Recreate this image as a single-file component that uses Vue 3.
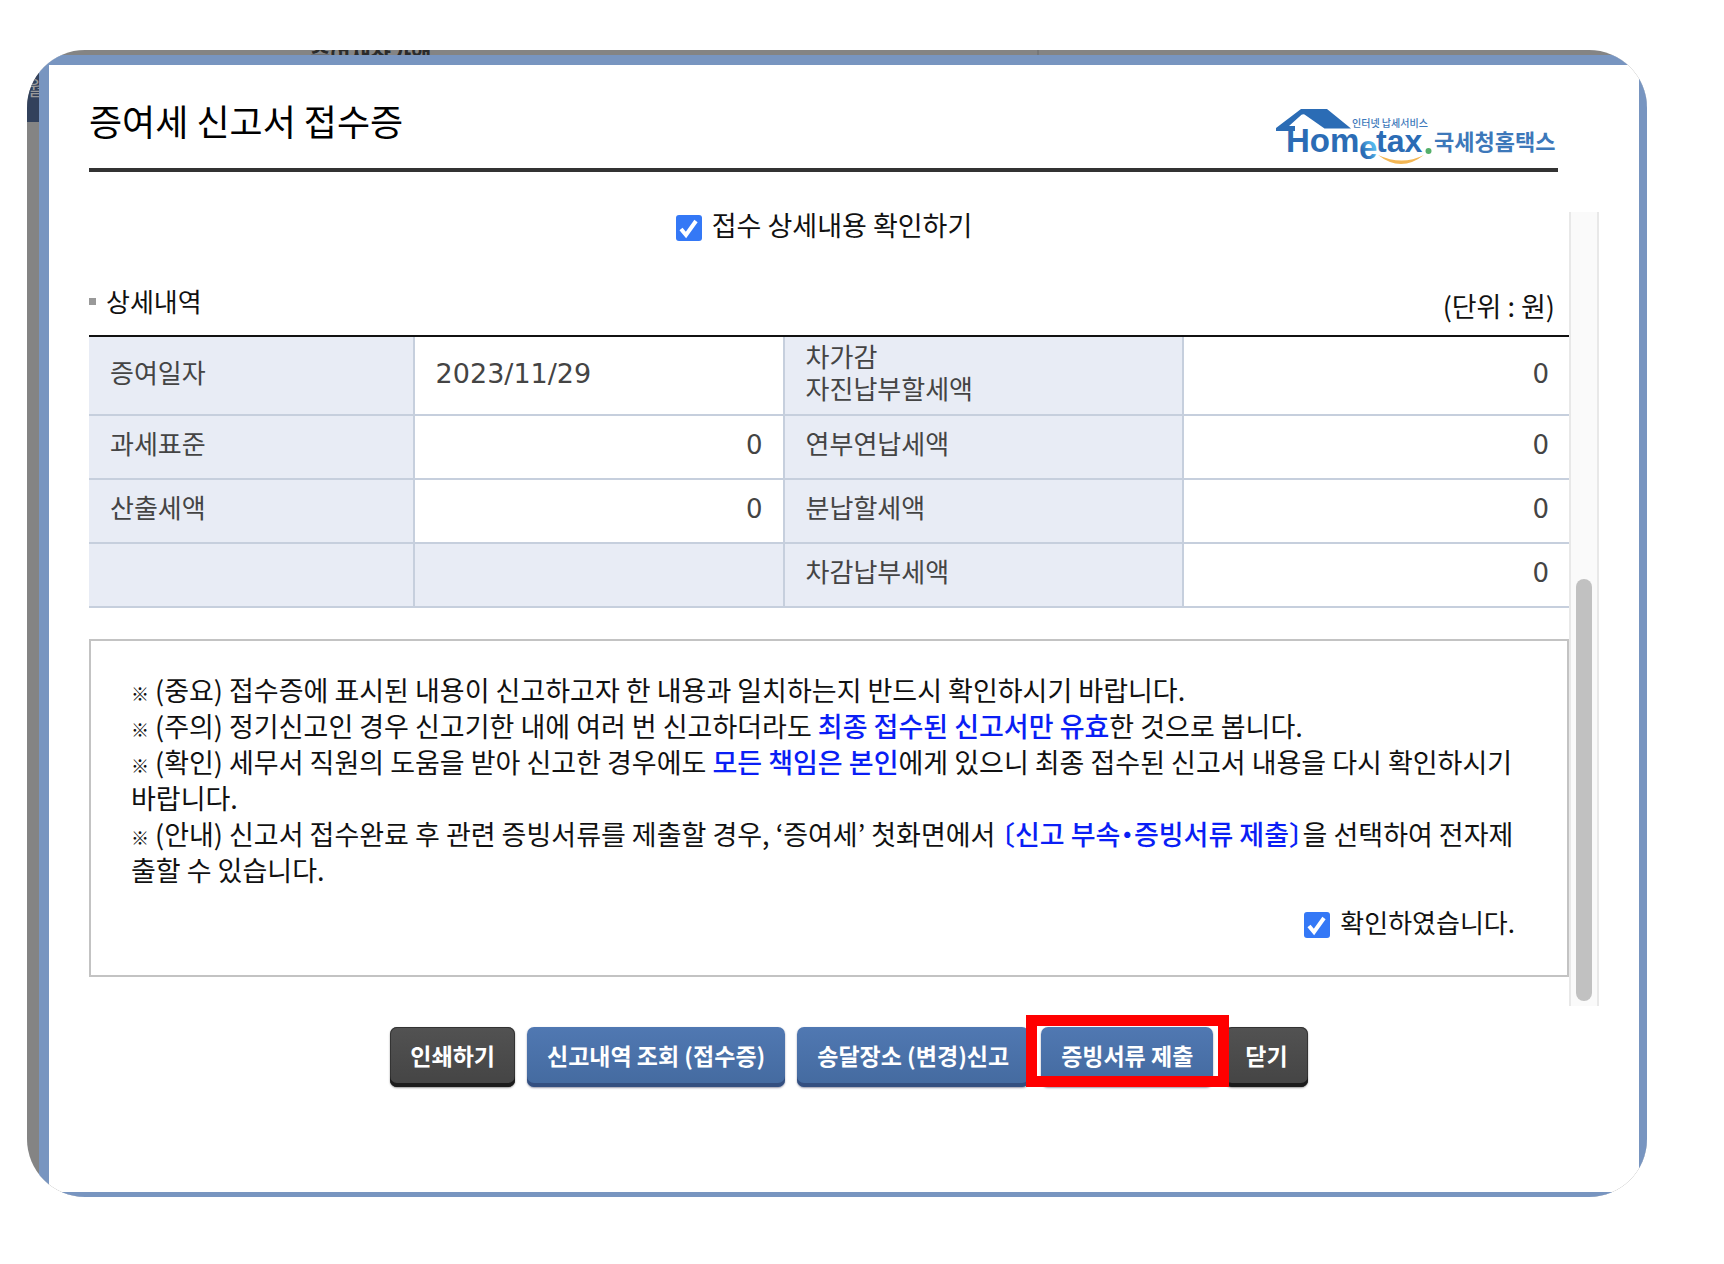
<script setup>
import { ref } from 'vue'

const showDetail = ref(true)
const confirmed = ref(true)

const notices = [
  [{ text: ' (중요) 접수증에 표시된 내용이 신고하고자 한 내용과 일치하는지 반드시 확인하시기 바랍니다.' }],
  [
    { text: ' (주의) 정기신고인 경우 신고기한 내에 여러 번 신고하더라도 ' },
    { text: '최종 접수된 신고서만 유효', strong: true },
    { text: '한 것으로 봅니다.' },
  ],
  [
    { text: ' (확인) 세무서 직원의 도움을 받아 신고한 경우에도 ' },
    { text: '모든 책임은 본인', strong: true },
    { text: '에게 있으니 최종 접수된 신고서 내용을 다시 확인하시기\n바랍니다.' },
  ],
  [
    { text: ' (안내) 신고서 접수완료 후 관련 증빙서류를 제출할 경우, ‘증여세’ 첫화면에서 ' },
    { text: '〔신고 부속・증빙서류 제출〕', strong: true },
    { text: '을 선택하여 전자제\n출할 수 있습니다.' },
  ],
]

const buttons = [
  { label: '인쇄하기', tone: 'dark' },
  { label: '신고내역 조회 (접수증)', tone: 'blue' },
  { label: '송달장소 (변경)신고', tone: 'blue' },
  { label: '증빙서류 제출', tone: 'blue', marked: true },
  { label: '닫기', tone: 'dark' },
]
</script>

<template>
  <div class="frame">
    <div class="behind" aria-hidden="true">
      <span class="behind-label">증여재산가액</span>
      <span class="behind-line"></span>
      <span class="behind-tab">월</span>
    </div>

    <main class="modal">
      <header class="head">
        <h1>증여세 신고서 접수증</h1>
        <svg class="logo" viewBox="15 12 284 60" role="img" aria-label="Hometax 국세청홈택스">
          <defs>
            <linearGradient id="e-tone" x1="0" y1="1" x2="1" y2="0">
              <stop offset="0.3" stop-color="#2b6cb5" />
              <stop offset="0.65" stop-color="#55b4ea" />
            </linearGradient>
          </defs>
          <path d="M17 33 L42 14 H68 L92 33.500 H65.500 L45.500 19.500 Q44 18.700 42.500 19.800 L30 31 H36 V36 H17 Z" fill="#2b6cb5" />
          <g class="latin">
            <text x="27" y="57" font-size="33" fill="#2b6cb5">Hom</text>
            <text x="117" y="57" font-size="32" fill="#2b6cb5">tax</text>
            <text x="100" y="64" font-size="33" fill="url(#e-tone)" stroke="#fff" stroke-width="1" paint-order="stroke">e</text>
          </g>
          <circle cx="169.500" cy="56" r="3" fill="#55b06a" />
          <path d="M119 60 Q142 78 165 60 Q143 71 119 60 Z" fill="#f3b653" />
          <text x="93" y="32" font-size="10" font-weight="500" fill="#3d78ba">인터넷 납세서비스</text>
          <text x="175" y="55" font-size="22" font-weight="700" fill="#3d78ba">국세청홈택스</text>
        </svg>
      </header>

      <div class="scroller">
        <div class="content">
          <label class="check detail-check">
            <input v-model="showDetail" type="checkbox" />
            <span>접수 상세내용 확인하기</span>
          </label>

          <div class="section-head">
            <h2>상세내역</h2>
            <span class="unit">(단위 : 원)</span>
          </div>

          <table>
            <colgroup>
              <col class="c1" /><col class="c2" /><col class="c3" /><col class="c4" />
            </colgroup>
            <tbody>
              <tr class="tall">
                <th scope="row">증여일자</th>
                <td class="date">2023/11/29</td>
                <th scope="row">차가감<br />자진납부할세액</th>
                <td>0</td>
              </tr>
              <tr>
                <th scope="row">과세표준</th>
                <td>0</td>
                <th scope="row">연부연납세액</th>
                <td>0</td>
              </tr>
              <tr>
                <th scope="row">산출세액</th>
                <td>0</td>
                <th scope="row">분납할세액</th>
                <td>0</td>
              </tr>
              <tr>
                <td class="blank"></td>
                <td class="blank"></td>
                <th scope="row">차감납부세액</th>
                <td>0</td>
              </tr>
            </tbody>
          </table>

          <section class="notice">
            <p v-for="(line, i) in notices" :key="i"><span class="mark">※</span><span v-for="(part, j) in line" :key="j" :class="{ strong: part.strong }">{{ part.text }}</span></p>
            <label class="check confirm-check">
              <input v-model="confirmed" type="checkbox" />
              <span>확인하였습니다.</span>
            </label>
          </section>
        </div>
        <div class="track"><div class="thumb"></div></div>
      </div>

      <footer class="actions">
        <button v-for="b in buttons" :key="b.label" type="button" :class="[b.tone, { marked: b.marked }]">{{ b.label }}</button>
      </footer>
    </main>
  </div>
</template>

<style>
body {
  margin: 0;
  background: #fff;
}
</style>

<style scoped>
.frame {
  position: relative;
  margin: 50px 77px 67px 27px;
  padding: 5px 0 0 12px;
  border-radius: 58px;
  overflow: hidden;
  background: #848484;
  color: #111;
  font-family: "Noto Sans CJK KR", sans-serif;
  font-size: 26px;
}
.behind-label {
  position: absolute;
  top: -11px;
  left: 283px;
  color: #2b2b2b;
  font-size: 22px;
  font-weight: 700;
  line-height: 28px;
}
.behind-line {
  position: absolute;
  top: 0;
  left: 1010px;
  width: 2px;
  height: 5px;
  background: #777;
}
.behind-tab {
  position: absolute;
  top: 20px;
  left: 0;
  width: 12px;
  height: 52px;
  overflow: hidden;
  background: #32415c;
  color: #999;
  font-size: 20px;
  line-height: 36px;
}
.modal {
  position: relative;
  border: solid #7895c0;
  border-width: 10px 8px 5px 10px;
  background: #fff;
}
.head {
  display: flex;
  justify-content: space-between;
  align-items: flex-start;
  margin: 0 81px 0 40px;
  padding-top: 25px;
  height: 78px;
  border-bottom: 4px solid #333;
}
h1 {
  margin: 0;
  color: #000;
  font-size: 36px;
  font-weight: 400;
  line-height: 60px;
}
.logo {
  flex: none;
  width: 284px;
  height: 60px;
  margin-top: 17px;
  font-family: "Noto Sans CJK KR", sans-serif;
}
.latin {
  font-family: "Liberation Sans", sans-serif;
  font-weight: 700;
}
.scroller {
  display: flex;
  margin: 40px 40px 0 40px;
}
.content {
  flex: 1;
  min-width: 0;
  padding-bottom: 29px;
}
.track {
  box-sizing: border-box;
  display: flex;
  align-items: flex-end;
  justify-content: center;
  width: 30px;
  padding-bottom: 5px;
  border: solid #e8e8e8;
  border-width: 0 2px;
  background: #fafafa;
}
.thumb {
  width: 16px;
  height: 53.5%;
  border-radius: 8px;
  background: #c1c1c1;
}
.check {
  display: flex;
  align-items: center;
  gap: 10px;
}
.check span {
  padding-bottom: 6px;
  line-height: 26px;
}
.detail-check {
  justify-content: center;
  margin-right: 10px;
  font-size: 27px;
}
.check input {
  appearance: none;
  width: 26px;
  height: 26px;
  margin: 0;
  border-radius: 3px;
  background: #3478f6;
}
.check input:checked {
  background: #3478f6 url("data:image/svg+xml,%3Csvg xmlns='http://www.w3.org/2000/svg' viewBox='0 0 26 26'%3E%3Cpath d='M5 14l5 6L20 6' fill='none' stroke='white' stroke-width='4'/%3E%3C/svg%3E") center / 100% no-repeat;
}
.section-head {
  display: flex;
  align-items: flex-start;
  justify-content: space-between;
  margin-top: 42px;
  padding: 0 14px 9px 0;
  line-height: 40px;
}
.unit {
  font-size: 27px;
}
h2 {
  display: flex;
  align-items: center;
  gap: 10px;
  margin: 0;
  font-size: 26px;
  font-weight: 400;
  line-height: 30px;
}
h2::before {
  content: "";
  width: 7px;
  height: 7px;
  background: #999;
}
table {
  width: 100%;
  border-collapse: separate;
  border-spacing: 0;
  table-layout: fixed;
  border-top: 2px solid #111;
  color: #444;
}
.c1 { width: 22%; }
.c2 { width: 25%; }
.c3 { width: 27%; }
.c4 { width: 26%; }
th,
td {
  box-sizing: border-box;
  height: 64px;
  padding: 0 20px 0 21px;
  border: solid #c6cfdd;
  border-width: 0 2px 2px 0;
  line-height: 32px;
}
td:last-child {
  border-right: 0;
}
.tall > * {
  height: 79px;
}
th {
  padding-bottom: 8px;
  background: #e8ecf5;
  font-weight: 400;
  text-align: left;
}
td {
  font-family: "DejaVu Sans", sans-serif;
  padding-bottom: 4px;
  text-align: right;
}
.date {
  font-size: 27px;
  text-align: left;
}
.blank {
  background: #e8ecf5;
}
.notice {
  margin-top: 31px;
  padding: 31px 52px 34px 40px;
  border: 2px solid #c3c3c3;
  color: #111;
}
.notice p {
  margin: 0;
  font-size: 27px;
  line-height: 36px;
  white-space: pre;
  font-feature-settings: "halt";
}
.mark {
  font-size: 18px;
  line-height: 18px;
}
.strong {
  color: #0a1ef5;
  font-weight: 500;
}
.confirm-check {
  justify-content: flex-end;
  margin-top: 21px;
}
.actions {
  display: flex;
  justify-content: center;
  gap: 12px;
  padding: 21px 0 105px 10px;
}
button {
  position: relative;
  height: 60px;
  padding: 0 20px 4px;
  border: 0;
  border-radius: 7px;
  color: #fff;
  font-family: inherit;
  font-size: 23px;
  font-weight: 700;
  white-space: nowrap;
}
.dark {
  background: linear-gradient(#525252, #444);
  box-shadow: inset 0 -4px #1b1b1b, inset 0 0 0 1px #333, 0 1px 2px #999;
}
.blue {
  background: linear-gradient(#5078b2, #446a9f);
  box-shadow: inset 0 -4px #344f80, 0 1px 2px #99a;
}
.marked {
  z-index: 1;
}
.marked::after {
  content: "";
  position: absolute;
  inset: -12px -16px 0 -15px;
  border: 11px solid #f00;
}
</style>
